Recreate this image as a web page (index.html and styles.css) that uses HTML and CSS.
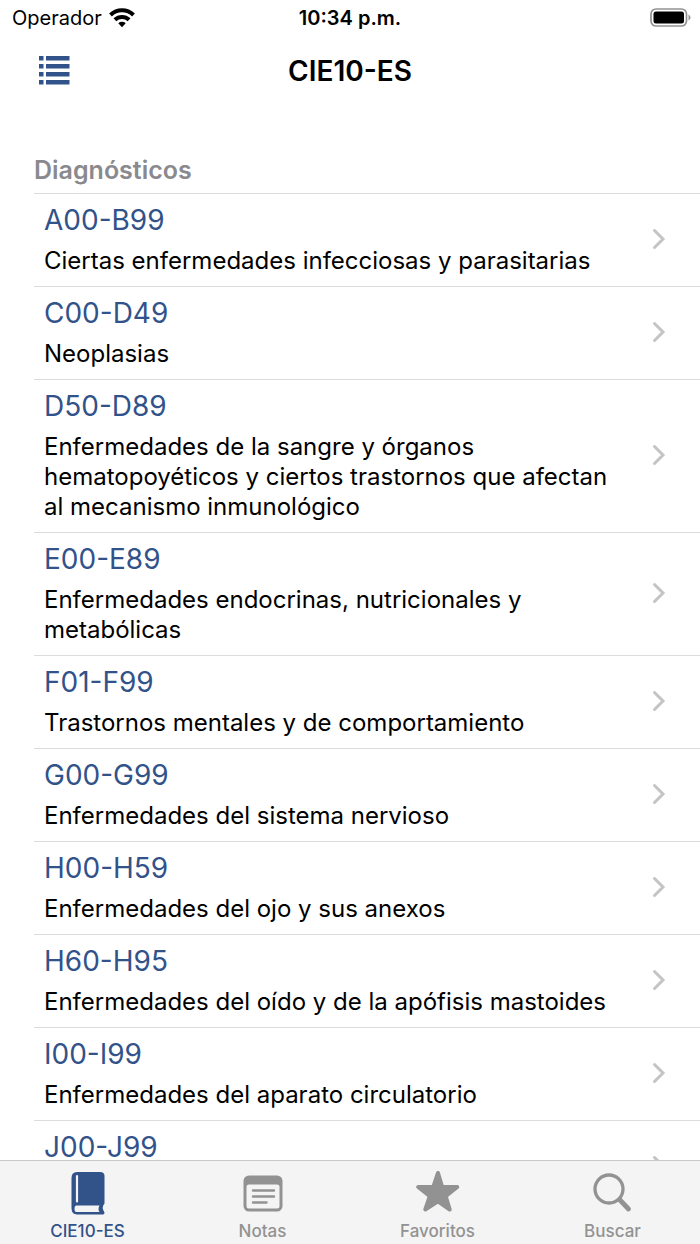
FILE: index.html
```html
<!DOCTYPE html>
<html lang="es">
<head>
<meta charset="utf-8">
<meta name="viewport" content="width=device-width, initial-scale=1">
<title>CIE10-ES</title>
<link rel="stylesheet" href="styles.css">
</head>
<body>
<svg class="defs" aria-hidden="true">
  <symbol id="chevron" viewBox="0 0 14 22"><path d="M2.5 2.5 11 11 2.5 19.5" fill="none" stroke="#c4c4c6" stroke-width="3" stroke-linecap="round" stroke-linejoin="miter"/></symbol>
</svg>
<div class="app">
  <div class="status">
    <div class="carrier"><span>Operador</span>
      <svg class="wifi" viewBox="0 0 26 20" aria-hidden="true"><g fill="none" stroke="#000" stroke-width="4"><path d="M1.500 7A16.500 16.500 0 0 1 24.500 7"/><path d="M5.900 11.800A10.300 10.300 0 0 1 20.100 11.800"/></g><path d="M9.300 15.200A5.400 5.400 0 0 1 16.700 15.200L13 19.200Z"/></svg>
    </div>
    <span class="time">10:34 p.m.</span>
    <svg class="battery" viewBox="0 0 41 20" aria-hidden="true"><rect x="1" y="1" width="35.500" height="17" rx="5" fill="none" stroke="#929292" stroke-width="1.700"/><rect x="3.500" y="3.500" width="30.500" height="12" rx="2.500"/><path d="M38.500 6.500Q40.500 7.500 40.500 9.500T38.500 12.500Z" fill="#929292"/></svg>
  </div>
  <header class="bar">
    <button class="menu" type="button" aria-label="Menú">
      <svg viewBox="0 0 32 30" fill="#32528a" aria-hidden="true"><path d="M0 0h4.500v4.500H0zM7 0h23.500v4.500H7zM0 8h4.500v4.500H0zM7 8h23.500v4.500H7zM0 16h4.500v4.500H0zM7 16h23.500v4.500H7zM0 24h4.500v4.500H0zM7 24h23.500v4.500H7z"/></svg>
    </button>
    <h1>CIE10-ES</h1>
  </header>
  <main class="content">
    <h2>Diagnósticos</h2>
    <ul class="list">
      <li><a href="#a00"><span class="text"><span class="code">A00-B99</span><span class="desc">Ciertas enfermedades infecciosas y parasitarias</span></span><svg class="chevron" aria-hidden="true"><use href="#chevron"/></svg></a></li>
      <li><a href="#c00"><span class="text"><span class="code">C00-D49</span><span class="desc">Neoplasias</span></span><svg class="chevron" aria-hidden="true"><use href="#chevron"/></svg></a></li>
      <li><a href="#d50"><span class="text"><span class="code">D50-D89</span><span class="desc">Enfermedades de la sangre y órganos hematopoyéticos y ciertos trastornos que afectan al mecanismo inmunológico</span></span><svg class="chevron" aria-hidden="true"><use href="#chevron"/></svg></a></li>
      <li><a href="#e00"><span class="text"><span class="code">E00-E89</span><span class="desc">Enfermedades endocrinas, nutricionales y metabólicas</span></span><svg class="chevron" aria-hidden="true"><use href="#chevron"/></svg></a></li>
      <li><a href="#f01"><span class="text"><span class="code">F01-F99</span><span class="desc">Trastornos mentales y de comportamiento</span></span><svg class="chevron" aria-hidden="true"><use href="#chevron"/></svg></a></li>
      <li><a href="#g00"><span class="text"><span class="code">G00-G99</span><span class="desc">Enfermedades del sistema nervioso</span></span><svg class="chevron" aria-hidden="true"><use href="#chevron"/></svg></a></li>
      <li><a href="#h00"><span class="text"><span class="code">H00-H59</span><span class="desc">Enfermedades del ojo y sus anexos</span></span><svg class="chevron" aria-hidden="true"><use href="#chevron"/></svg></a></li>
      <li><a href="#h60"><span class="text"><span class="code">H60-H95</span><span class="desc">Enfermedades del oído y de la apófisis mastoides</span></span><svg class="chevron" aria-hidden="true"><use href="#chevron"/></svg></a></li>
      <li><a href="#i00"><span class="text"><span class="code">I00-I99</span><span class="desc">Enfermedades del aparato circulatorio</span></span><svg class="chevron" aria-hidden="true"><use href="#chevron"/></svg></a></li>
      <li><a href="#j00"><span class="text"><span class="code">J00-J99</span><span class="desc"></span></span><svg class="chevron" aria-hidden="true"><use href="#chevron"/></svg></a></li>
    </ul>
  </main>
  <nav class="tabs">
    <a class="tab active" href="#cie10" aria-current="page">
      <svg viewBox="0 0 44 44" aria-hidden="true"><path d="M11 1H34Q38.500 1 38.500 5V32.500Q35 36 38.500 41.500Q38.500 43.500 37 43.500H11Q5.500 43.500 5.500 37V7Q5.500 1 11 1Z" fill="currentColor"/><path d="M11 5V30.500" stroke="#f4f4f4" stroke-width="2.200" stroke-linecap="round"/><path d="M10.500 34.500H33.500Q31.500 38 33.500 41H10.500Q8.500 41 8.500 37.800T10.500 34.500Z" fill="#f4f4f4"/></svg>
      <span>CIE10-ES</span></a>
    <a class="tab" href="#notas">
      <svg viewBox="0 0 44 44" aria-hidden="true"><rect x="2.500" y="4.500" width="39" height="36" rx="5.500" fill="currentColor"/><rect x="5.500" y="13.500" width="33" height="24" rx="2.500" fill="#f4f4f4"/><path d="M12 19.500H33M12 25.500H33M12 31.500H25.500" stroke="currentColor" stroke-width="2.400" stroke-linecap="round"/></svg>
      <span>Notas</span></a>
    <a class="tab" href="#favoritos">
      <svg viewBox="0 0 44 44" aria-hidden="true"><path d="M22 2 26.200 16H41.300L29.700 25.200 33.700 38.500 22 30.300 9.300 38.500 13.800 25.200 2.200 16H17.300Z" fill="currentColor" stroke="currentColor" stroke-width="4" stroke-linejoin="round"/></svg>
      <span>Favoritos</span></a>
    <a class="tab" href="#buscar">
      <svg viewBox="0 0 44 44" aria-hidden="true"><g fill="none" stroke="currentColor"><circle cx="18" cy="18" r="14" stroke-width="3.300"/><path d="M28.500 28.500 37.500 38" stroke-width="4.800" stroke-linecap="round"/></g></svg>
      <span>Buscar</span></a>
  </nav>
</div>
</body>
</html>
```
FILE: styles.css
```css
* { box-sizing: border-box; }
body { margin: 0; background: #fff; color: #000; font-family: Inter, "Liberation Sans", sans-serif; }
h1, h2, ul { margin: 0; padding: 0; }
a { color: inherit; text-decoration: none; }
.defs { display: none; }
.app { display: flex; flex-direction: column; height: 100vh; }
.status { display: grid; grid-template-columns: 1fr auto 1fr; align-items: center; height: 36px; padding: 0 9px; font-size: 20px; line-height: 24px; }
.carrier { display: flex; align-items: center; gap: 7px; padding-left: 3px; }
.wifi { width: 26px; height: 20px; }
.time { font-weight: 600; }
.battery { width: 41px; height: 20px; justify-self: end; }
.bar { display: grid; grid-template-columns: 1fr auto 1fr; align-items: center; height: 70px; padding: 0 39px; }
.menu { width: 32px; height: 30px; padding: 0; border: 0; background: none; }
.menu svg { display: block; width: 100%; height: 100%; }
h1 { font-size: 28px; line-height: 32px; font-weight: 600; }
.content { flex: 1; min-height: 0; padding: 48px 0 0 34px; overflow-y: auto; scrollbar-width: none; }
h2 { font-size: 25px; line-height: 32px; font-weight: 600; color: #8a8a8e; padding-bottom: 7px; }
.list { list-style: none; }
.list a { display: flex; align-items: center; min-height: 93px; padding: 8px 34px 10px 10px; border-top: 1px solid #dcdcde; }
.text { flex: 1; padding-right: 28px; }
.code, .desc { display: block; }
.code { font-size: 28px; line-height: 36px; color: #32528a; margin-bottom: 8px; }
.desc { min-height: 30px; font-size: 24px; line-height: 30px; }
.chevron { width: 14px; height: 22px; flex: none; }
.tabs { display: grid; grid-template-columns: repeat(4, 1fr); height: 84px; border-top: 1px solid #c9c9c9; background: #f4f4f4; }
.tab { display: flex; flex-direction: column; align-items: center; gap: 5px; padding-top: 10px; color: #929292; font-size: 17px; line-height: 22px; font-weight: 500; }
.tab svg { width: 44px; height: 44px; }
.active { color: #32528a; }
```
